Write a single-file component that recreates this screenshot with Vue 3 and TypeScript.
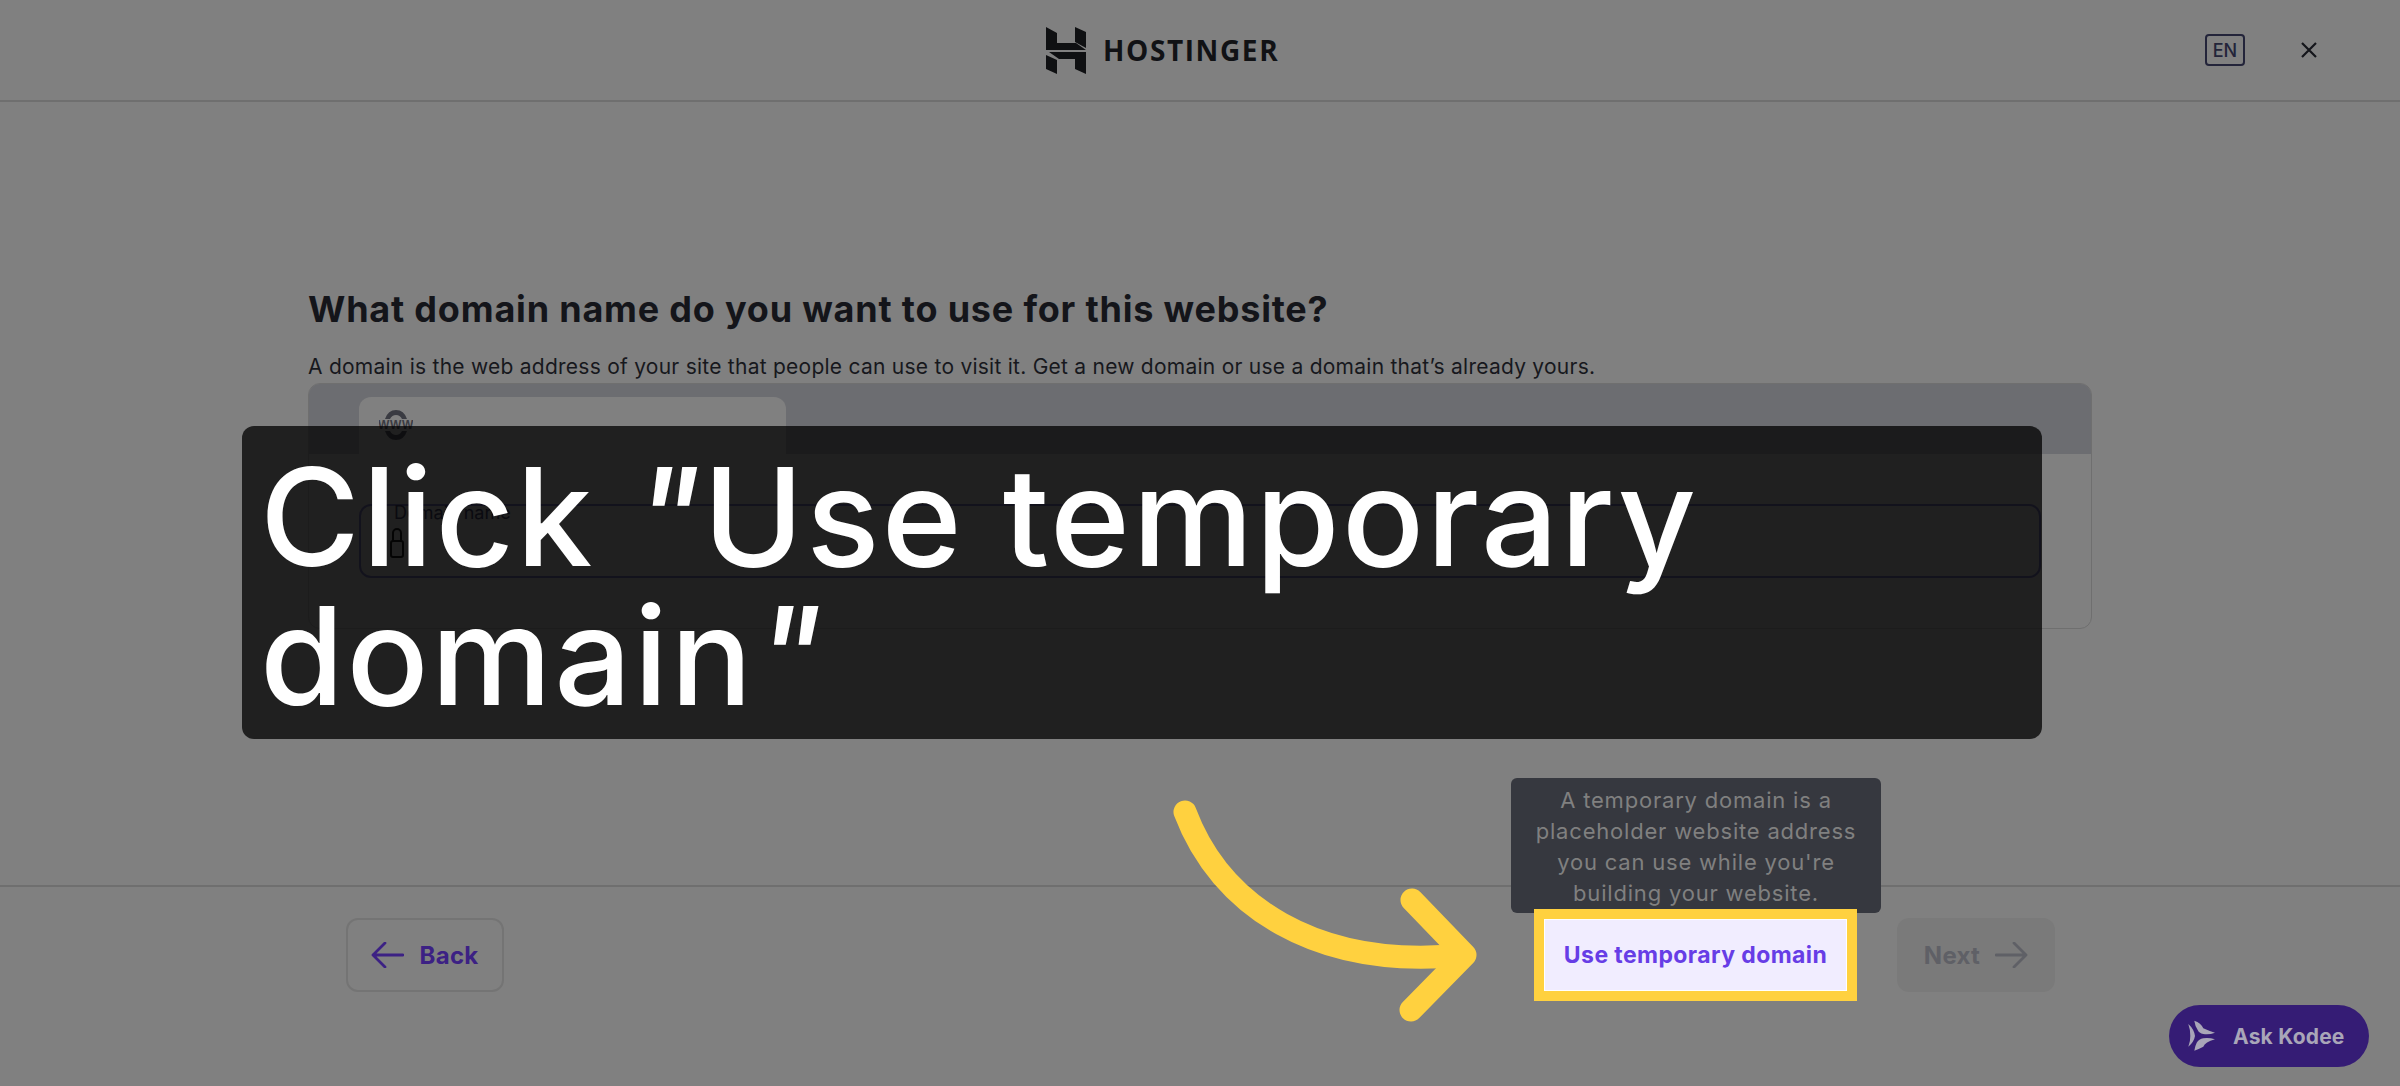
<script setup lang="ts">
const title = 'What domain name do you want to use for this website?'
const intro = 'A domain is the web address of your site that people can use to visit it. Get a new domain or use a domain that’s already yours.'
const tip = 'A temporary domain is a placeholder website address you can use while you\'re building your website.'
</script>

<template>
  <div class="page">
    <header class="top">
      <div class="brand">
        <svg class="logo" width="40" height="47" viewBox="0 0 40 47" fill="#0f1012">
          <polygon points="0,0 11,6 11,16 30,16 40,23 0,23" />
          <polygon points="29,0 40,5 40,21 29,15" />
          <polygon points="3,25 40,25 40,47 29,42 29,32 13,32" />
          <polygon points="0,28 11,33 11,47 0,42" />
        </svg>
        <span class="brand-name">HOSTINGER</span>
      </div>
      <div class="top-actions">
        <span class="lang">EN</span>
        <svg width="16" height="16" viewBox="0 0 16 16" fill="none" stroke="#14151a" stroke-width="2.2">
          <path d="M1 1l14 14M15 1L1 15" />
        </svg>
      </div>
    </header>

    <main class="main">
      <h1 class="title">{{ title }}</h1>
      <p class="intro">{{ intro }}</p>
      <section class="card">
        <div class="tabs">
          <div class="tab">
            <svg width="34" height="32" viewBox="0 0 34 32" fill="#3a3b42">
              <path d="M6 10Q9 1 17 1t11 9h-5Q21 6 17 6t-6 4z" />
              <path d="M6 22q3 9 11 9t11-9h-5q-2 4-6 4t-6-4z" />
              <text x="17" y="20" text-anchor="middle" class="www">WWW</text>
            </svg>
          </div>
        </div>
        <div class="card-body">
          <div class="field">
            <span class="field-label">Domain name</span>
            <svg class="lock" width="14" height="34" viewBox="0 0 14 34" fill="none" stroke="#111" stroke-width="2">
              <path d="M3 16V8a4 4 0 0 1 8 0v8" />
              <rect x="1" y="16" width="12" height="16" rx="2" />
            </svg>
          </div>
        </div>
      </section>
    </main>

    <footer class="bottom">
      <button class="btn back" type="button">
        <svg width="33" height="26" viewBox="0 0 33 26" fill="none" stroke="#3c2184" stroke-width="2.8" stroke-linecap="round" stroke-linejoin="round">
          <path d="M32 13H2M14 1L2 13l12 12" />
        </svg>
        Back
      </button>
      <div class="temp-wrap">
        <div class="tooltip">{{ tip }}</div>
        <button class="temp" type="button">Use temporary domain</button>
      </div>
      <button class="btn next" type="button">
        Next
        <svg width="33" height="26" viewBox="0 0 33 26" fill="none" stroke="#5f6066" stroke-width="2.8" stroke-linecap="round" stroke-linejoin="round">
          <path d="M1 13h30M19 1l12 12-12 12" />
        </svg>
      </button>
    </footer>

    <div class="callout">Click <i>"</i>Use temporary domain<i>"</i></div>

    <svg class="arrow" width="320" height="235" viewBox="0 0 320 235" fill="none" stroke="#ffd13f" stroke-width="23" stroke-linecap="round" stroke-linejoin="round">
      <path d="M20 17C55 110 150 175 298 160" />
      <path d="M247 105l53 55-54 55" />
    </svg>

    <button class="kodee" type="button">
      <svg width="30" height="32" viewBox="0 0 30 32" fill="#a9a6b8">
        <path d="M1.3 4Q7 9 8 16 7 22 1.3 26.700 3.500 21 3.300 16 3.500 10 1.300 4z" />
        <path d="M7.300.7Q14 3 16.300 8.300 22 11 28 12.700 22 15 16.300 14 12 13 10.700 10 8 6 7.300.7z" />
        <path d="M28 19.300Q22 17.500 16.300 18.300 12 19 9.700 22.700 8 26 7.300 30.700 12 29 16.300 26.700 18 22 28 19.300z" />
      </svg>
      Ask Kodee
    </button>
  </div>
</template>

<style>
html, body { margin: 0; background: #808080; }
</style>

<style scoped>
.page {
  width: 2400px;
  height: 1086px;
  position: relative;
  overflow: hidden;
  display: flex;
  flex-direction: column;
  background: #808080;
  font-family: Inter, "Liberation Sans", sans-serif;
  color: #14151a;
}
.top {
  height: 102px;
  flex: none;
  box-sizing: border-box;
  border-bottom: 2px solid #6f6f6f;
  display: flex;
  align-items: center;
  justify-content: space-between;
  padding: 0 83px 0 1046px;
}
.brand { display: flex; align-items: center; gap: 17px; }
.brand-name {
  font-family: "Open Sans", sans-serif;
  font-weight: 700;
  font-size: 28px;
  letter-spacing: 1.6px;
  color: #111215;
}
.top-actions { display: flex; align-items: center; gap: 56px; }
.lang {
  box-sizing: border-box;
  width: 40px;
  height: 32px;
  border: 2px solid #23243a;
  border-radius: 4px;
  display: flex;
  align-items: center;
  justify-content: center;
  font-size: 18px;
  font-weight: 500;
  color: #23243a;
}
.main {
  flex: 1;
  width: 1784px;
  margin: 0 auto;
  padding-top: 185px;
  box-sizing: border-box;
}
.title { margin: 0; font-size: 36px; line-height: 44px; font-weight: 700; letter-spacing: 0.8px; color: #14151a; }
.intro { margin: 21px 0 0; font-size: 21px; line-height: 30px; letter-spacing: 0.25px; color: #17181d; }
.card {
  margin-top: 1px;
  height: 246px;
  box-sizing: border-box;
  border: 1px solid #6f6f6f;
  border-radius: 12px;
  overflow: hidden;
}
.tabs { height: 70px; background: #6c6d71; padding: 13px 0 0 50px; box-sizing: border-box; }
.tab {
  width: 427px;
  height: 57px;
  background: #808080;
  border-radius: 12px 12px 0 0;
  padding: 12px 0 0 20px;
  box-sizing: border-box;
}
.www { font-size: 12px; font-weight: 700; letter-spacing: 0.6px; font-family: "Liberation Sans", sans-serif; }
.card-body { padding: 50px 50px 0; }
.field {
  height: 74px;
  box-sizing: border-box;
  border: 2px solid #4a4770;
  border-radius: 12px;
  padding: 0 0 0 30px;
  position: relative;
}
.field-label { display: block; font-size: 18px; line-height: 20px; margin: -3px 0 0 3px; color: #2a2a40; }
.lock { display: block; position: absolute; left: 29px; top: 19px; }
.bottom {
  height: 201px;
  flex: none;
  box-sizing: border-box;
  border-top: 2px solid #6f6f6f;
  display: flex;
  align-items: flex-start;
  padding: 31px 345px 0 346px;
}
.btn {
  width: 158px;
  height: 74px;
  box-sizing: border-box;
  border-radius: 12px;
  display: flex;
  align-items: center;
  justify-content: center;
  gap: 15px;
  font: 700 24px Inter, sans-serif;
  letter-spacing: 0.3px;
}
.back { border: 2px solid #747474; background: transparent; color: #3c2184; }
.next { border: 0; background: #7a7a7a; color: #5f6066; }
.temp-wrap {
  margin-left: auto;
  margin-right: 40px;
  position: relative;
  width: 323px;
  height: 92px;
  margin-top: -9px;
}
.temp {
  position: relative;
  width: 100%;
  height: 100%;
  box-sizing: border-box;
  border: 10px solid #ffd13f;
  box-shadow: inset 0 0 0 1px #fff;
  background: #f1edff;
  color: #673de6;
  font: 700 23px Inter, sans-serif;
  letter-spacing: 0.4px;
  display: block;
  padding: 0;
}
.tooltip {
  position: absolute;
  left: -23px;
  top: -131px;
  width: 370px;
  height: 135px;
  box-sizing: border-box;
  padding: 7px 20px 0;
  background: #36383f;
  border-radius: 6px;
  text-align: center;
  color: #808080;
  font-size: 22px;
  letter-spacing: 0.8px;
  line-height: 31px;
}
.callout {
  position: absolute;
  left: 242px;
  top: 426px;
  width: 1800px;
  height: 313px;
  box-sizing: border-box;
  padding: 21px 18px 0;
  background: rgba(0, 0, 0, 0.75);
  border-radius: 12px;
  color: #fff;
  font-family: Inter, sans-serif;
  font-size: 136px;
  font-weight: 500;
  line-height: 139px;
  letter-spacing: 2.4px;
}
.arrow { position: absolute; left: 1165px; top: 795px; }
.kodee {
  position: absolute;
  left: 2169px;
  top: 1005px;
  width: 200px;
  height: 62px;
  border: 0;
  border-radius: 31px;
  background: #351c75;
  color: #a9a6b8;
  font: 700 21px Inter, sans-serif;
  letter-spacing: 0.2px;
  display: flex;
  align-items: center;
  gap: 16px;
  padding: 0 0 0 18px;
  box-sizing: border-box;
}
</style>
